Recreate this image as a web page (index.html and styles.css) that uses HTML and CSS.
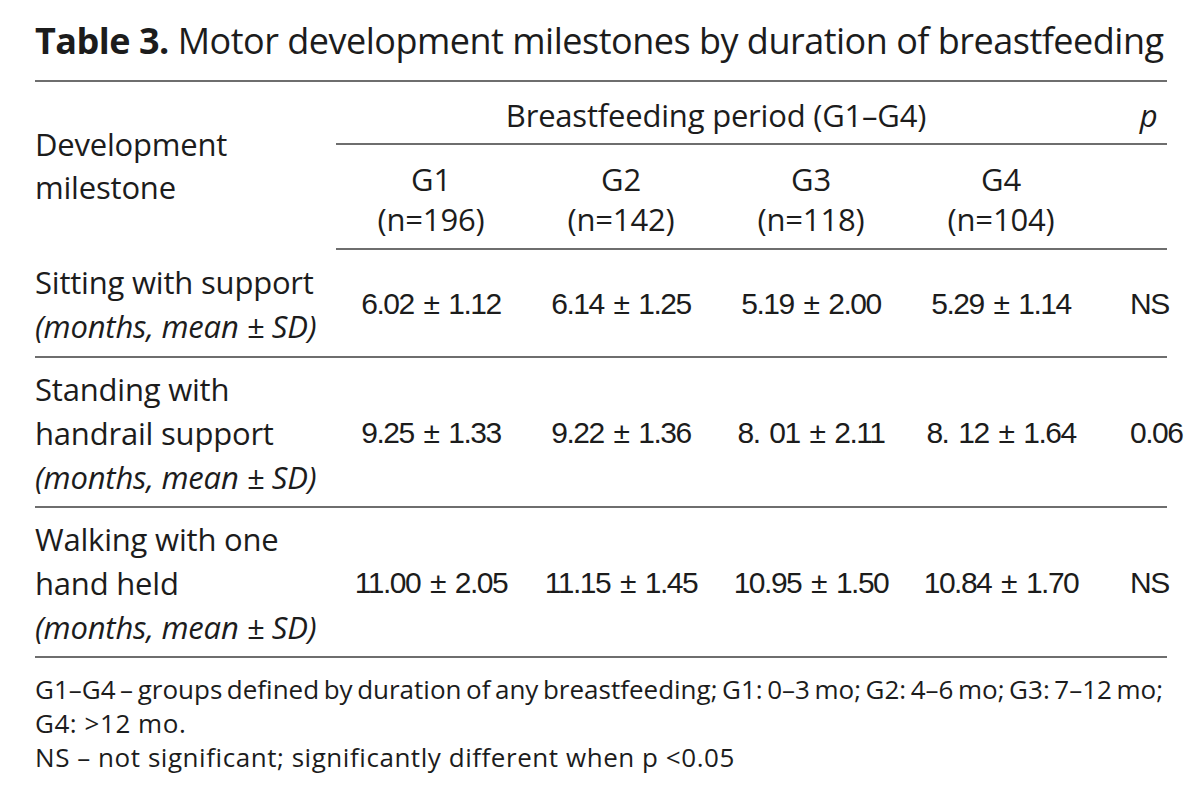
FILE: index.html
```html
<!DOCTYPE html>
<html lang="en">
<head>
<meta charset="utf-8">
<title>Table 3</title>
<link rel="stylesheet" href="styles.css">
</head>
<body>
<div class="page">
  <h1 class="title"><b>Table 3.</b> Motor development milestones by duration of breastfeeding</h1>
  <table class="tbl">
    <colgroup>
      <col class="c-label"><col class="c-g"><col class="c-g"><col class="c-g"><col class="c-g"><col class="c-p">
    </colgroup>
    <thead>
      <tr class="h1">
        <th class="label" rowspan="2">Development<br>milestone</th>
        <th class="span" colspan="4">Breastfeeding period (G1–G4)</th>
        <th class="pcol span"><i>p</i></th>
      </tr>
      <tr class="h2">
        <th>G1<br>(n=196)</th>
        <th>G2<br>(n=142)</th>
        <th>G3<br>(n=118)</th>
        <th>G4<br>(n=104)</th>
        <th class="pcol"></th>
      </tr>
    </thead>
    <tbody>
      <tr class="r2">
        <td class="label">Sitting with support<br><i>(months, mean ± SD)</i></td>
        <td class="num">6.02 ± 1.12</td>
        <td class="num">6.14 ± 1.25</td>
        <td class="num">5.19 ± 2.00</td>
        <td class="num">5.29 ± 1.14</td>
        <td class="num pcol">NS</td>
      </tr>
      <tr class="r3">
        <td class="label">Standing with<br>handrail support<br><i>(months, mean ± SD)</i></td>
        <td class="num">9.25 ± 1.33</td>
        <td class="num">9.22 ± 1.36</td>
        <td class="num">8. 01 ± 2.11</td>
        <td class="num">8. 12 ± 1.64</td>
        <td class="num pcol">0.06</td>
      </tr>
      <tr class="r3">
        <td class="label">Walking with one<br>hand held<br><i>(months, mean ± SD)</i></td>
        <td class="num">11.00 ± 2.05</td>
        <td class="num">11.15 ± 1.45</td>
        <td class="num">10.95 ± 1.50</td>
        <td class="num">10.84 ± 1.70</td>
        <td class="num pcol">NS</td>
      </tr>
    </tbody>
  </table>
  <div class="notes">
    <p><span class="tight">G1–G4 – groups defined by duration of any breastfeeding; G1: 0–3 mo; G2: 4–6 mo; G3: 7–12 mo;</span><br>G4: &gt;12 mo.</p>
    <p>NS – not significant; significantly different when p &lt;0.05</p>
  </div>
</div>
</body>
</html>
```
FILE: styles.css
```css
html, body {
  margin: 0;
  padding: 0;
  background: #ffffff;
}
body {
  color: #1c1c1c;
  font-family: "Open Sans", "Noto Sans", sans-serif;
}
.page {
  width: 1132px;
  padding: 0 0 0 35px;
}
.title {
  margin: 0;
  height: 80px;
  font-size: 36px;
  font-weight: 400;
  line-height: 82px;
  letter-spacing: -0.5px;
  white-space: nowrap;
}
.title b {
  font-weight: 700;
}
.tbl {
  width: 1132px;
  border-collapse: collapse;
  table-layout: fixed;
  border-top: 2px solid #6e6e6e;
}
.c-label { width: 301px; }
.c-g { width: 190px; }
.c-p { width: 71px; }
.tbl th, .tbl td {
  padding: 0;
  font-weight: 400;
  font-size: 31px;
  letter-spacing: -0.2px;
  vertical-align: middle;
}
.tbl th {
  text-align: center;
}
.tbl th.label {
  text-align: left;
  line-height: 43px;
  padding-top: 0;
}
.h1 th {
  height: 57px;
  line-height: 40px;
}
.h1 th.span {
  border-bottom: 2px solid #6e6e6e;
  padding-top: 4px;
}
.h2 th {
  height: 98px;
  line-height: 40px;
  padding-top: 5px;
  border-bottom: 2px solid #6e6e6e;
}
.pcol {
  padding-left: 34px !important;
  text-align: center;
}
.tbl td {
  line-height: 44px;
  border-bottom: 2px solid #6e6e6e;
}
.tbl td.label {
  text-align: left;
  white-space: nowrap;
}
.tbl td.label i {
  font-style: italic;
}
.tbl td.num {
  text-align: center;
  font-family: "Liberation Sans Narrow", "Liberation Sans", sans-serif;
  font-size: 30px;
  letter-spacing: -1.5px;
  word-spacing: 3px;
  white-space: nowrap;
}
.r2 td {
  height: 104px;
  padding-top: 2px;
}
.r3 td {
  height: 146px;
  padding-top: 2px;
}
.notes {
  padding-top: 14px;
  font-size: 26px;
  line-height: 34px;
  letter-spacing: 0.55px;
}
.notes p {
  margin: 0;
}
.notes .tight {
  letter-spacing: 0;
  word-spacing: -2.2px;
  white-space: nowrap;
}
```
